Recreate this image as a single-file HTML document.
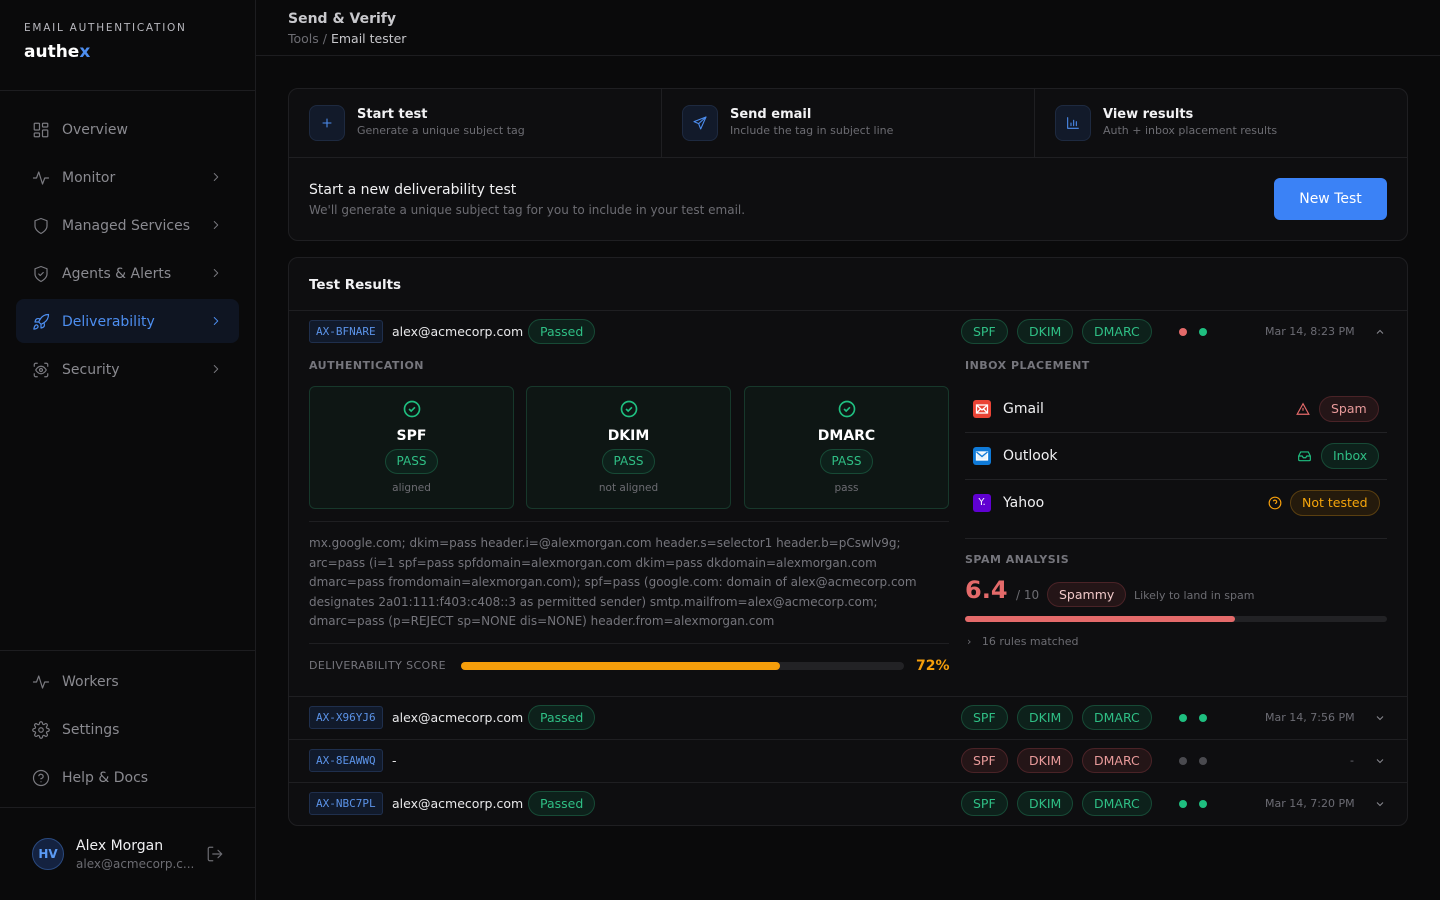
<!DOCTYPE html>
<html><head><meta charset="utf-8">
<style>
*{box-sizing:border-box;margin:0;padding:0}
body{width:1440px;height:900px;background:#0a0a0b;font-family:"DejaVu Sans","Liberation Sans",sans-serif;color:#e8e8ea;position:relative;overflow:hidden}
.abs{position:absolute}
.sb{left:0;top:0;width:256px;height:900px;background:#0a0a0b;border-right:1px solid #1d1d20}
.hl{height:1px;background:#1d1d20}
.nav{left:16px;width:223px;height:44px;border-radius:8px;display:flex;align-items:center;padding-left:16px;font-size:14px;color:#8a8a90;padding-top:2px}
.nav svg{width:18px;height:18px;margin-right:12px;stroke:#7a7a80;fill:none;stroke-width:1.6;stroke-linecap:round;stroke-linejoin:round}
.nav .chev{position:absolute;right:16px;top:15px;width:14px;height:14px;margin:0}
.card{background:#0e0e10;border:1px solid #1f1f22;border-radius:10px}
.ico{width:36px;height:36px;border-radius:8px;background:#121a2a;border:1px solid #1e2a40;display:flex;align-items:center;justify-content:center}
.ico svg{width:16px;height:16px;stroke:#4d8ef0;fill:none;stroke-width:1.6;stroke-linecap:round;stroke-linejoin:round}
.st{font-size:13px;font-weight:bold;color:#f2f2f4}
.ss{font-size:11px;color:#6c6c72;margin-top:2px}
.tag{font-family:"DejaVu Sans Mono","Liberation Mono",monospace;font-size:11px;color:#5b93e8;background:#111a2b;border:1px solid #1f2f4d;border-radius:3px;height:23px;line-height:21px;padding:0 6px}
.pill{height:25px;line-height:23px;border-radius:13px;font-size:12.5px;padding:0 11px;display:inline-block}
.g{background:#0d211b;border:1px solid #174a36;color:#2fbf85}
.r{background:#241517;border:1px solid #4a2327;color:#e89a9a}
.row{left:289px;width:1118px;height:43px;border-top:1px solid #1f1f22}
.lab{font-size:11px;font-weight:bold;letter-spacing:.5px;color:#75757c}
.ab{width:205px;height:123px;border-radius:6px;background:#0e1614;border:1px solid #17382b;text-align:center}
.dot{width:8px;height:8px;border-radius:4px}
.date{font-size:11px;color:#6c6c74}
.em{font-size:12.5px;color:#e8e8ea}
</style></head><body>
<div class="abs sb"></div>
<div class="abs" style="left:24px;top:22px;font-size:10.5px;letter-spacing:1.75px;color:#b8b8be">EMAIL AUTHENTICATION</div>
<div class="abs" style="left:24px;top:42px;font-size:17px;font-weight:bold;color:#fff">authe<span style="color:#4d8ef0">x</span></div>
<div class="abs hl" style="left:0;top:90px;width:256px"></div>

<div class="abs nav" style="top:107px"><svg viewBox="0 0 24 24"><rect x="3" y="3" width="7" height="9" rx="1"/><rect x="14" y="3" width="7" height="5" rx="1"/><rect x="14" y="12" width="7" height="9" rx="1"/><rect x="3" y="16" width="7" height="5" rx="1"/></svg>Overview</div>
<div class="abs nav" style="top:155px"><svg viewBox="0 0 24 24"><path d="M2 12h4l3-8 5 16 3-8h5"/></svg>Monitor<svg class="chev" viewBox="0 0 24 24"><path d="M9 6l6 6-6 6"/></svg></div>
<div class="abs nav" style="top:203px"><svg viewBox="0 0 24 24"><path d="M12 22s8-4 8-10V5l-8-3-8 3v7c0 6 8 10 8 10z"/></svg>Managed Services<svg class="chev" viewBox="0 0 24 24"><path d="M9 6l6 6-6 6"/></svg></div>
<div class="abs nav" style="top:251px"><svg viewBox="0 0 24 24"><path d="M12 22s8-4 8-10V5l-8-3-8 3v7c0 6 8 10 8 10z"/><path d="M9 12l2 2 4-4"/></svg>Agents &amp; Alerts<svg class="chev" viewBox="0 0 24 24"><path d="M9 6l6 6-6 6"/></svg></div>
<div class="abs nav" style="top:299px;background:#0f1522;color:#4d8ef0"><svg viewBox="0 0 24 24" style="stroke:#4d8ef0"><path d="M4.5 16.5c-1.5 1.3-2 5-2 5s3.7-.5 5-2c.7-.8.7-2.1-.1-2.9a2.2 2.2 0 0 0-2.9-.1z"/><path d="M12 15l-3-3a22 22 0 0 1 2-4A13 13 0 0 1 22 2c0 2.7-.8 7.5-6 11a22 22 0 0 1-4 2z"/><path d="M9 12H4s.6-3 2-4c1.6-1.1 5 0 5 0M12 15v5s3-.6 4-2c1.1-1.6 0-5 0-5"/></svg>Deliverability<svg class="chev" viewBox="0 0 24 24" style="stroke:#4d8ef0"><path d="M9 6l6 6-6 6"/></svg></div>
<div class="abs nav" style="top:347px"><svg viewBox="0 0 24 24"><path d="M3 7V5a2 2 0 0 1 2-2h2M17 3h2a2 2 0 0 1 2 2v2M21 17v2a2 2 0 0 1-2 2h-2M7 21H5a2 2 0 0 1-2-2v-2"/><circle cx="12" cy="12" r="2"/><path d="M5 12s2.5-5 7-5 7 5 7 5-2.5 5-7 5-7-5-7-5z"/></svg>Security<svg class="chev" viewBox="0 0 24 24"><path d="M9 6l6 6-6 6"/></svg></div>

<div class="abs hl" style="left:0;top:650px;width:256px"></div>
<div class="abs nav" style="top:659px"><svg viewBox="0 0 24 24"><path d="M2 12h4l3-8 5 16 3-8h5"/></svg>Workers</div>
<div class="abs nav" style="top:707px"><svg viewBox="0 0 24 24"><circle cx="12" cy="12" r="3"/><path d="M19.4 15a1.7 1.7 0 0 0 .3 1.8l.1.1a2 2 0 1 1-2.8 2.8l-.1-.1a1.7 1.7 0 0 0-1.8-.3 1.7 1.7 0 0 0-1 1.5V21a2 2 0 1 1-4 0v-.1a1.7 1.7 0 0 0-1.1-1.5 1.7 1.7 0 0 0-1.8.3l-.1.1a2 2 0 1 1-2.8-2.8l.1-.1a1.7 1.7 0 0 0 .3-1.8 1.7 1.7 0 0 0-1.5-1H3a2 2 0 1 1 0-4h.1a1.7 1.7 0 0 0 1.5-1.1 1.7 1.7 0 0 0-.3-1.8l-.1-.1a2 2 0 1 1 2.8-2.8l.1.1a1.7 1.7 0 0 0 1.8.3H9a1.7 1.7 0 0 0 1-1.5V3a2 2 0 1 1 4 0v.1a1.7 1.7 0 0 0 1 1.5 1.7 1.7 0 0 0 1.8-.3l.1-.1a2 2 0 1 1 2.8 2.8l-.1.1a1.7 1.7 0 0 0-.3 1.8V9a1.7 1.7 0 0 0 1.5 1H21a2 2 0 1 1 0 4h-.1a1.7 1.7 0 0 0-1.5 1z"/></svg>Settings</div>
<div class="abs nav" style="top:755px"><svg viewBox="0 0 24 24"><circle cx="12" cy="12" r="10"/><path d="M9.1 9a3 3 0 0 1 5.8 1c0 2-3 3-3 3M12 17h.01"/></svg>Help &amp; Docs</div>
<div class="abs hl" style="left:0;top:807px;width:256px"></div>
<div class="abs" style="left:32px;top:838px;width:32px;height:32px;border-radius:16px;background:#142240;border:1px solid #2a4a80;color:#5b9bf5;font-size:12px;font-weight:bold;text-align:center;line-height:30px">HV</div>
<div class="abs" style="left:76px;top:838px;font-size:14px;color:#f0f0f2">Alex Morgan</div>
<div class="abs" style="left:76px;top:857px;font-size:12px;color:#6c6c72">alex@acmecorp.c...</div>
<svg class="abs" style="left:206px;top:845px" width="18" height="18" viewBox="0 0 24 24" fill="none" stroke="#6c6c72" stroke-width="1.6" stroke-linecap="round" stroke-linejoin="round"><path d="M9 21H5a2 2 0 0 1-2-2V5a2 2 0 0 1 2-2h4M16 17l5-5-5-5M21 12H9"/></svg>

<!-- header -->
<div class="abs" style="left:288px;top:11px;font-size:14px;font-weight:bold;color:#c8c8cc">Send &amp; Verify</div>
<div class="abs" style="left:288px;top:31px;font-size:12.5px;color:#6c6c72">Tools / <span style="color:#c8c8cc">Email tester</span></div>
<div class="abs hl" style="left:256px;top:55px;width:1184px"></div>

<!-- steps card -->
<div class="abs card" style="left:288px;top:88px;width:1120px;height:153px"></div>
<div class="abs hl" style="left:289px;top:157px;width:1118px;background:#1f1f22"></div>
<div class="abs" style="left:661px;top:89px;width:1px;height:68px;background:#1f1f22"></div>
<div class="abs" style="left:1034px;top:89px;width:1px;height:68px;background:#1f1f22"></div>
<div class="abs ico" style="left:309px;top:105px"><svg viewBox="0 0 24 24"><path d="M12 6v12M6 12h12"/></svg></div>
<div class="abs" style="left:357px;top:107px"><div class="st">Start test</div><div class="ss">Generate a unique subject tag</div></div>
<div class="abs ico" style="left:682px;top:105px"><svg viewBox="0 0 24 24"><path d="M21 3L3 10l7 3 3 8z"/><path d="M21 3L10 13"/></svg></div>
<div class="abs" style="left:730px;top:107px"><div class="st">Send email</div><div class="ss">Include the tag in subject line</div></div>
<div class="abs ico" style="left:1055px;top:105px"><svg viewBox="0 0 24 24"><path d="M4 4v16h16M9 16v-4M13 16V8M17 16v-6"/></svg></div>
<div class="abs" style="left:1103px;top:107px"><div class="st">View results</div><div class="ss">Auth + inbox placement results</div></div>
<div class="abs" style="left:309px;top:182px;font-size:14px;color:#f0f0f2">Start a new deliverability test</div>
<div class="abs" style="left:309px;top:203px;font-size:12px;color:#6c6c72">We'll generate a unique subject tag for you to include in your test email.</div>
<div class="abs" style="left:1274px;top:178px;width:113px;height:42px;border-radius:6px;background:#3b82f6;color:#fff;font-size:14px;text-align:center;line-height:43px">New Test</div>

<!-- results -->
<div class="abs card" style="left:288px;top:257px;width:1120px;height:569px"></div>
<div class="abs" style="left:309px;top:277px;font-size:13.5px;font-weight:bold;color:#f2f2f4">Test Results</div>

<div class="abs row" style="top:310px"></div>
<div class="abs tag" style="left:309px;top:320px">AX-BFNARE</div>
<div class="abs em" style="left:392px;top:324px">alex@acmecorp.com</div>
<div class="abs pill g" style="left:528px;top:319px">Passed</div>
<div class="abs pill g" style="left:961px;top:319px">SPF</div>
<div class="abs pill g" style="left:1017px;top:319px">DKIM</div>
<div class="abs pill g" style="left:1082px;top:319px">DMARC</div>
<div class="abs dot" style="left:1179px;top:328px;background:#e46a6a"></div>
<div class="abs dot" style="left:1199px;top:328px;background:#1fbf80"></div>
<div class="abs date" style="left:1265px;top:325px">Mar 14, 8:23 PM</div>
<svg class="abs" style="left:1374px;top:326px" width="12" height="12" viewBox="0 0 24 24" fill="none" stroke="#8a8a90" stroke-width="2"><path d="M6 15l6-6 6 6"/></svg>

<div class="abs lab" style="left:309px;top:359px">AUTHENTICATION</div>
<div class="abs ab" style="left:309px;top:386px"></div>
<div class="abs ab" style="left:526px;top:386px"></div>
<div class="abs ab" style="left:744px;top:386px"></div>
<div class="abs" style="left:309px;top:399px;width:205px;text-align:center"><svg width="20" height="20" viewBox="0 0 24 24" fill="none" stroke="#1fbf80" stroke-width="2"><circle cx="12" cy="12" r="9"/><path d="M8.5 12l2.5 2.5 4.5-4.5"/></svg><div style="font-size:14px;font-weight:bold;color:#fff;margin-top:5px">SPF</div><div class="pill g" style="margin-top:5px;font-size:12px">PASS</div><div style="font-size:10.5px;color:#6c6c72;margin-top:8px">aligned</div></div>
<div class="abs" style="left:526px;top:399px;width:205px;text-align:center"><svg width="20" height="20" viewBox="0 0 24 24" fill="none" stroke="#1fbf80" stroke-width="2"><circle cx="12" cy="12" r="9"/><path d="M8.5 12l2.5 2.5 4.5-4.5"/></svg><div style="font-size:14px;font-weight:bold;color:#fff;margin-top:5px">DKIM</div><div class="pill g" style="margin-top:5px;font-size:12px">PASS</div><div style="font-size:10.5px;color:#6c6c72;margin-top:8px">not aligned</div></div>
<div class="abs" style="left:744px;top:399px;width:205px;text-align:center"><svg width="20" height="20" viewBox="0 0 24 24" fill="none" stroke="#1fbf80" stroke-width="2"><circle cx="12" cy="12" r="9"/><path d="M8.5 12l2.5 2.5 4.5-4.5"/></svg><div style="font-size:14px;font-weight:bold;color:#fff;margin-top:5px">DMARC</div><div class="pill g" style="margin-top:5px;font-size:12px">PASS</div><div style="font-size:10.5px;color:#6c6c72;margin-top:8px">pass</div></div>

<div class="abs hl" style="left:309px;top:521px;width:640px;background:#1f1f22"></div>
<div class="abs" style="left:309px;top:534px;font-size:12px;line-height:19.5px;color:#75757c;white-space:nowrap">mx.google.com; dkim=pass header.i=@alexmorgan.com header.s=selector1 header.b=pCswlv9g;<br>arc=pass (i=1 spf=pass spfdomain=alexmorgan.com dkim=pass dkdomain=alexmorgan.com<br>dmarc=pass fromdomain=alexmorgan.com); spf=pass (google.com: domain of alex@acmecorp.com<br>designates 2a01:111:f403:c408::3 as permitted sender) smtp.mailfrom=alex@acmecorp.com;<br>dmarc=pass (p=REJECT sp=NONE dis=NONE) header.from=alexmorgan.com</div>
<div class="abs hl" style="left:309px;top:643px;width:640px;background:#1f1f22"></div>
<div class="abs" style="left:309px;top:659px;font-size:11px;letter-spacing:.4px;color:#75757c">DELIVERABILITY SCORE</div>
<div class="abs" style="left:461px;top:662px;width:443px;height:8px;border-radius:4px;background:#222225"><div style="width:319px;height:8px;border-radius:4px;background:#f59e0b"></div></div>
<div class="abs" style="left:916px;top:658px;font-size:14px;font-weight:bold;color:#f59e0b">72%</div>

<div class="abs lab" style="left:965px;top:359px">INBOX PLACEMENT</div>
<div class="abs" style="left:973px;top:400px;width:18px;height:18px;border-radius:3px;background:#ea4335"><svg width="18" height="18" viewBox="0 0 18 18" fill="none" stroke="#fff" stroke-width="1.3"><rect x="3.5" y="5" width="11" height="8"/><path d="M3.5 5l5.5 5 5.5-5M3.5 13l4-4M14.5 13l-4-4"/></svg></div>
<div class="abs" style="left:1003px;top:401px;font-size:14px;color:#f0f0f2">Gmail</div>
<svg class="abs" style="left:1296px;top:402px" width="14" height="14" viewBox="0 0 24 24" fill="none" stroke="#e46a6a" stroke-width="2"><path d="M12 3L2 21h20z"/><path d="M12 10v5M12 18v.01"/></svg>
<div class="abs pill r" style="left:1319px;top:396px;height:26px;line-height:24px">Spam</div>
<div class="abs hl" style="left:965px;top:432px;width:422px;background:#222225"></div>
<div class="abs" style="left:973px;top:447px;width:18px;height:18px;border-radius:3px;background:#0f7ad8"><svg width="18" height="18" viewBox="0 0 18 18" fill="none" stroke="#fff" stroke-width="1.3"><rect x="3.5" y="5" width="11" height="8" fill="#fff" fill-opacity=".9"/><path d="M3.5 5l5.5 4.5 5.5-4.5" stroke="#0f7ad8"/></svg></div>
<div class="abs" style="left:1003px;top:448px;font-size:14px;color:#f0f0f2">Outlook</div>
<svg class="abs" style="left:1297px;top:449px" width="15" height="14" viewBox="0 0 24 24" fill="none" stroke="#1fbf80" stroke-width="2"><path d="M22 12h-6l-2 3h-4l-2-3H2"/><path d="M5.5 5h13L22 12v6a2 2 0 0 1-2 2H4a2 2 0 0 1-2-2v-6z"/></svg>
<div class="abs pill g" style="left:1321px;top:443px;height:26px;line-height:24px">Inbox</div>
<div class="abs hl" style="left:965px;top:479px;width:422px;background:#222225"></div>
<div class="abs" style="left:973px;top:494px;width:18px;height:18px;border-radius:3px;background:#6001d2;color:#fff;font-size:10px;text-align:center;line-height:18px">Y.</div>
<div class="abs" style="left:1003px;top:495px;font-size:14px;color:#f0f0f2">Yahoo</div>
<svg class="abs" style="left:1268px;top:496px" width="14" height="14" viewBox="0 0 24 24" fill="none" stroke="#f59e0b" stroke-width="2"><circle cx="12" cy="12" r="10"/><path d="M9.1 9a3 3 0 0 1 5.8 1c0 2-3 3-3 3M12 17h.01"/></svg>
<div class="abs pill" style="left:1290px;top:490px;height:26px;line-height:24px;background:#241a0c;border:1px solid #5a3f10;color:#f5a50b">Not tested</div>
<div class="abs hl" style="left:965px;top:538px;width:422px;background:#222225"></div>
<div class="abs lab" style="left:965px;top:553px">SPAM ANALYSIS</div>
<div class="abs" style="left:965px;top:576px;font-size:24px;font-weight:bold;color:#e46a6a">6.4</div>
<div class="abs" style="left:1016px;top:588px;font-size:12px;color:#6c6c72">/ 10</div>
<div class="abs pill r" style="left:1047px;top:582px;color:#f0c8c8">Spammy</div>
<div class="abs" style="left:1134px;top:589px;font-size:11px;color:#6c6c72">Likely to land in spam</div>
<div class="abs" style="left:965px;top:616px;width:422px;height:6px;border-radius:3px;background:#222225"><div style="width:270px;height:6px;border-radius:3px;background:#e46a6a"></div></div>
<div class="abs" style="left:967px;top:635px;font-size:11px;color:#6c6c72">›&nbsp;&nbsp;&nbsp;16 rules matched</div>

<!-- rows -->
<div class="abs row" style="top:696px"></div>
<div class="abs tag" style="left:309px;top:706px">AX-X96YJ6</div>
<div class="abs em" style="left:392px;top:710px">alex@acmecorp.com</div>
<div class="abs pill g" style="left:528px;top:705px">Passed</div>
<div class="abs pill g" style="left:961px;top:705px">SPF</div>
<div class="abs pill g" style="left:1017px;top:705px">DKIM</div>
<div class="abs pill g" style="left:1082px;top:705px">DMARC</div>
<div class="abs dot" style="left:1179px;top:714px;background:#1fbf80"></div>
<div class="abs dot" style="left:1199px;top:714px;background:#1fbf80"></div>
<div class="abs date" style="left:1265px;top:711px">Mar 14, 7:56 PM</div>
<svg class="abs" style="left:1374px;top:712px" width="12" height="12" viewBox="0 0 24 24" fill="none" stroke="#8a8a90" stroke-width="2"><path d="M6 9l6 6 6-6"/></svg>

<div class="abs row" style="top:739px"></div>
<div class="abs tag" style="left:309px;top:749px">AX-8EAWWQ</div>
<div class="abs em" style="left:392px;top:753px">-</div>
<div class="abs pill r" style="left:961px;top:748px">SPF</div>
<div class="abs pill r" style="left:1017px;top:748px">DKIM</div>
<div class="abs pill r" style="left:1082px;top:748px">DMARC</div>
<div class="abs dot" style="left:1179px;top:757px;background:#4a4a4f"></div>
<div class="abs dot" style="left:1199px;top:757px;background:#4a4a4f"></div>
<div class="abs date" style="left:1350px;top:754px">-</div>
<svg class="abs" style="left:1374px;top:755px" width="12" height="12" viewBox="0 0 24 24" fill="none" stroke="#8a8a90" stroke-width="2"><path d="M6 9l6 6 6-6"/></svg>

<div class="abs row" style="top:782px"></div>
<div class="abs tag" style="left:309px;top:792px">AX-NBC7PL</div>
<div class="abs em" style="left:392px;top:796px">alex@acmecorp.com</div>
<div class="abs pill g" style="left:528px;top:791px">Passed</div>
<div class="abs pill g" style="left:961px;top:791px">SPF</div>
<div class="abs pill g" style="left:1017px;top:791px">DKIM</div>
<div class="abs pill g" style="left:1082px;top:791px">DMARC</div>
<div class="abs dot" style="left:1179px;top:800px;background:#1fbf80"></div>
<div class="abs dot" style="left:1199px;top:800px;background:#1fbf80"></div>
<div class="abs date" style="left:1265px;top:797px">Mar 14, 7:20 PM</div>
<svg class="abs" style="left:1374px;top:798px" width="12" height="12" viewBox="0 0 24 24" fill="none" stroke="#8a8a90" stroke-width="2"><path d="M6 9l6 6 6-6"/></svg>
</body></html>
